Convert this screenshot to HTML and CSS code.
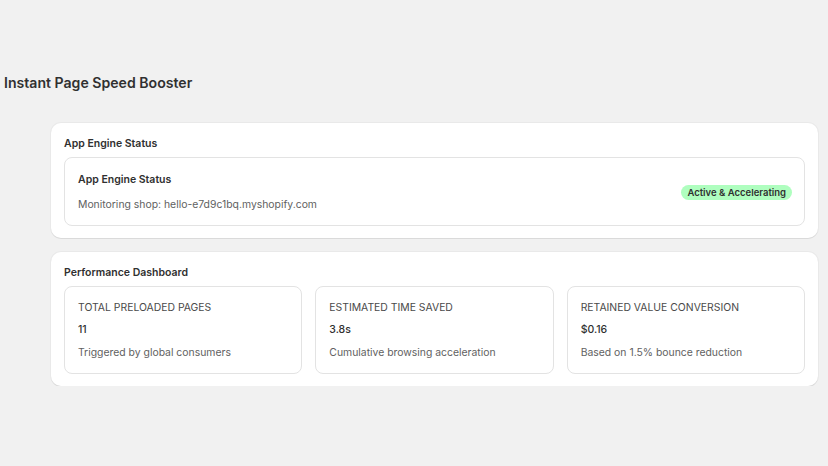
FILE: index.html
```html
<!DOCTYPE html>
<html>
<head>
  <title>Instant Page Speed Booster</title>
  <link rel="stylesheet" href="styles.css">
</head>
<body>
  <div class="page">
    <h1 class="page-title">Instant Page Speed Booster</h1>

    <div class="layout">
      <div class="card">
        <h2 class="card-title">App Engine Status</h2>
        <div class="box status-box">
          <div class="status-text">
            <h3 class="box-title">App Engine Status</h3>
            <p class="muted">Monitoring shop: hello-e7d9c1bq.myshopify.com</p>
          </div>
          <span class="badge">Active &amp; Accelerating</span>
        </div>
      </div>

      <div class="card">
        <h2 class="card-title">Performance Dashboard</h2>
        <div class="stats">
          <div class="box stat">
            <p class="stat-label">TOTAL PRELOADED PAGES</p>
            <p class="stat-value">11</p>
            <p class="muted">Triggered by global consumers</p>
          </div>
          <div class="box stat">
            <p class="stat-label">ESTIMATED TIME SAVED</p>
            <p class="stat-value">3.8s</p>
            <p class="muted">Cumulative browsing acceleration</p>
          </div>
          <div class="box stat">
            <p class="stat-label">RETAINED VALUE CONVERSION</p>
            <p class="stat-value">$0.16</p>
            <p class="muted">Based on 1.5% bounce reduction</p>
          </div>
        </div>
      </div>
    </div>
  </div>
</body>
</html>
```

FILE: styles.css
```css
/* General styles */
* {
  box-sizing: border-box;
}

body {
  font-family: Inter, "Noto Sans", sans-serif;
  margin: 0;
  padding: 0;
  background-color: #f1f1f1;
  color: #303030;
}

p,
h1,
h2,
h3 {
  margin: 0;
}

.page {
  padding: 73px 10px 0 4px;
}

.page-title {
  font-size: 14.1px;
  font-weight: 600;
  line-height: 20px;
  color: #303030;
}

.layout {
  margin: 30px 0 0 47px;
  display: flex;
  flex-direction: column;
  gap: 14px;
}

/* Cards */
.card {
  background-color: #fff;
  border-radius: 10px;
  padding: 14px 13px 12px;
  box-shadow: 0 1px 0 rgba(26, 26, 26, 0.07), 0 0 0 1px rgba(0, 0, 0, 0.03);
}

.card-title {
  font-size: 10.5px;
  font-weight: 600;
  line-height: 14px;
  margin-bottom: 6px;
}

.box {
  border: 1px solid #e3e3e3;
  border-radius: 8px;
  padding: 13px 13px;
}

.status-box {
  display: flex;
  align-items: center;
  justify-content: space-between;
  padding: 15px 12px 13px 13px;
}

.box-title {
  font-size: 10.5px;
  font-weight: 600;
  line-height: 14px;
  margin-bottom: 11px;
}

.muted {
  font-size: 10.4px;
  line-height: 14px;
  color: #616161;
}

.badge {
  background-color: #affebf;
  color: #303030;
  font-size: 9.5px;
  font-weight: 600;
  line-height: 15px;
  padding: 0 6px;
  border-radius: 8px;
}

/* Stats */
.stats {
  display: grid;
  grid-template-columns: repeat(3, 1fr);
  gap: 13px;
}

.stat {
  padding: 14px 13px 13px;
}

.stat-label {
  font-size: 10.4px;
  line-height: 14px;
  color: #4a4a4a;
  margin-bottom: 8px;
}

.stat-value {
  font-size: 10.5px;
  font-weight: 500;
  line-height: 14px;
  margin-bottom: 9px;
}
```
